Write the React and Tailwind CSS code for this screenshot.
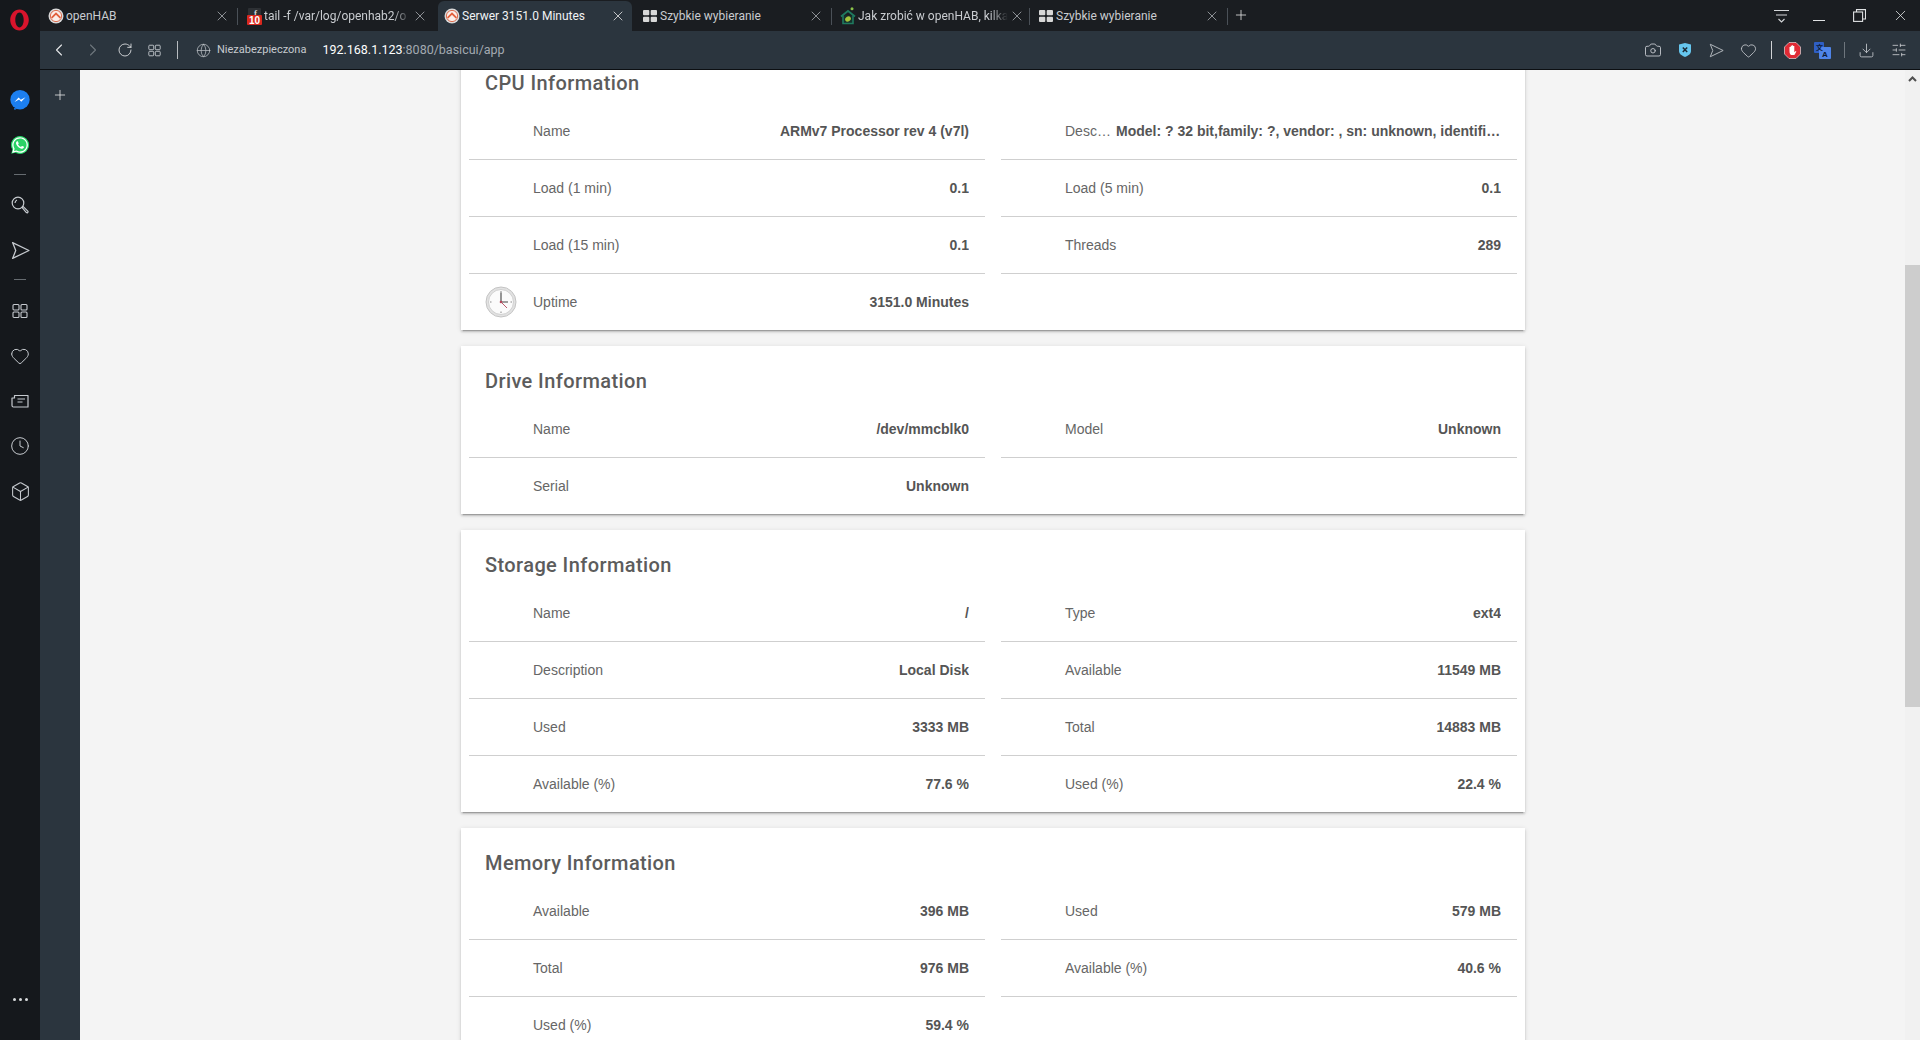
import React from 'react';
import { ChevronLeft, ChevronRight, RotateCw, Globe, Camera, Heart, Download, SlidersHorizontal, X, Plus, Clock, Box } from 'lucide-react';
import { FaWhatsapp } from 'react-icons/fa';

const cards = [
  {
    title: 'CPU Information',
    rows: [
      { label: 'Name', value: 'ARMv7 Processor rev 4 (v7l)' },
      { label: 'Description', value: 'Model: ? 32 bit,family: ?, vendor: , sn: unknown, identifier: ?', shrink: true },
      { label: 'Load (1 min)', value: '0.1' },
      { label: 'Load (5 min)', value: '0.1' },
      { label: 'Load (15 min)', value: '0.1' },
      { label: 'Threads', value: '289' },
      { label: 'Uptime', value: '3151.0 Minutes', clock: true },
    ],
  },
  {
    title: 'Drive Information',
    rows: [
      { label: 'Name', value: '/dev/mmcblk0' },
      { label: 'Model', value: 'Unknown' },
      { label: 'Serial', value: 'Unknown' },
    ],
  },
  {
    title: 'Storage Information',
    rows: [
      { label: 'Name', value: '/' },
      { label: 'Type', value: 'ext4' },
      { label: 'Description', value: 'Local Disk' },
      { label: 'Available', value: '11549 MB' },
      { label: 'Used', value: '3333 MB' },
      { label: 'Total', value: '14883 MB' },
      { label: 'Available (%)', value: '77.6 %' },
      { label: 'Used (%)', value: '22.4 %' },
    ],
  },
  {
    title: 'Memory Information',
    rows: [
      { label: 'Available', value: '396 MB' },
      { label: 'Used', value: '579 MB' },
      { label: 'Total', value: '976 MB' },
      { label: 'Available (%)', value: '40.6 %' },
      { label: 'Used (%)', value: '59.4 %' },
    ],
  },
];

const tabs = [
  { title: 'openHAB', icon: 'hab', sep: true },
  { title: 'tail -f /var/log/openhab2/o', icon: 'tail', fade: true },
  { title: 'Serwer 3151.0 Minutes', icon: 'hab', active: true },
  { title: 'Szybkie wybieranie', icon: 'dial', sep: true },
  { title: 'Jak zrobić w openHAB, kilka', icon: 'home', fade: true, sep: true },
  { title: 'Szybkie wybieranie', icon: 'dial', sep: true },
];

const HabIcon = () => (
  <svg width="16" height="16" viewBox="0 0 16 16" className="shrink-0">
    <circle cx="8" cy="8" r="7.5" fill="#d9d9d9" />
    <circle cx="8" cy="8" r="5.6" fill="#fbeee9" stroke="#d9603f" strokeWidth="0.9" />
    <path d="M3.6 9.8 8 5.6l4.400 4.200" fill="none" stroke="#e2603c" strokeWidth="1.8" />
  </svg>
);

const TailIcon = () => (
  <svg width="15" height="17" viewBox="0 0 15 17" className="shrink-0">
    <rect x="1" y="0" width="13" height="9" rx="1" fill="#2d3034" />
    <text x="7" y="7.500" fill="#d5d5d5" fontSize="9" fontWeight="700" fontFamily="Liberation Serif, serif">f</text>
    <rect x="0" y="7" width="15" height="10" rx="1" fill="#d9281e" />
    <text x="7.500" y="16" fill="#fff" fontSize="10" fontWeight="700" textAnchor="middle" fontFamily="Liberation Sans, sans-serif">10</text>
  </svg>
);

const DialIcon = () => (
  <svg width="14" height="12" viewBox="0 0 14 12" className="shrink-0">
    <rect x="0" y="0" width="6.3" height="5.3" rx="1" fill="#d8d8d8" />
    <rect x="7.7" y="0" width="6.3" height="5.3" rx="1" fill="#d8d8d8" />
    <rect x="0" y="6.7" width="6.3" height="5.3" rx="1" fill="#d8d8d8" />
    <rect x="7.7" y="6.7" width="6.3" height="5.3" rx="1" fill="#d8d8d8" />
  </svg>
);

const HomeIcon = () => (
  <svg width="16" height="18" viewBox="0 0 16 18" className="shrink-0">
    <circle cx="12" cy="1.800" r="1.500" fill="#8bc34a" />
    <path d="M3 8.500V16.500H13V8.500" fill="#16302b" stroke="#1f7a5f" strokeWidth="1.600" />
    <path d="M1 9.500 8 4l7 5.500" fill="none" stroke="#1f7a5f" strokeWidth="1.800" />
    <ellipse cx="8" cy="12" rx="3" ry="2.400" fill="#a5c53a" transform="rotate(-35 8 12)" />
  </svg>
);

const favicons = { hab: HabIcon, tail: TailIcon, dial: DialIcon, home: HomeIcon };

const Tab = ({ tab }) => {
  const Icon = favicons[tab.icon];
  return (
    <div className="relative w-[198px] h-[30px] mt-px flex">
      <div className={`flex-1 flex items-center ${tab.active ? 'mx-[2px] px-[6px] bg-[#2b353e] rounded-t-md' : 'px-[8px]'}`}>
        <div className="w-[16px] flex justify-center shrink-0"><Icon /></div>
        <div className={`ml-[2px] flex-1 min-w-0 overflow-hidden whitespace-nowrap text-[12px] ${tab.active ? 'text-[#f0f2f4]' : 'text-[#c9ccd0]'} ${tab.fade ? '[mask-image:linear-gradient(to_right,black_88%,transparent)]' : ''}`}>
          {tab.title}
        </div>
        <X size={16} strokeWidth={1.2} className={`ml-[1px] shrink-0 ${tab.active ? 'text-[#e8e8e8]' : 'text-[#a9adb2]'}`} />
      </div>
      {tab.sep && <div className="absolute right-0 top-[7px] h-[17px] w-px bg-[#4a5057]" />}
    </div>
  );
};

const GridIcon = ({ size = 16, color = '#c6cacf' }) => (
  <svg width={size} height={size} viewBox="0 0 16 16" fill="none" stroke={color} strokeWidth="1.1">
    <rect x="1" y="1.5" width="6" height="5.5" rx="1" />
    <rect x="9" y="1.5" width="6" height="5.5" rx="1" />
    <rect x="1" y="9" width="6" height="5.5" rx="1" />
    <rect x="9" y="9" width="6" height="5.5" rx="1" />
  </svg>
);

const SendIcon = ({ size = 18, color = '#c6cacf' }) => (
  <svg width={size} height={size} viewBox="0 0 18 18" fill="none" stroke={color} strokeWidth="1.2" strokeLinejoin="round">
    <path d="M1.5 1.5 17 9 1.5 16.5 4.5 9z" />
  </svg>
);

const NewsIcon = () => (
  <svg width="18" height="14" viewBox="0 0 18 14" fill="none" stroke="#c6cacf" strokeWidth="1.2" strokeLinejoin="round">
    <path d="M3.5 1.5h13.5v11.5H2.5A1.5 1.5 0 0 1 1 11.5V4h2.5z" />
    <path d="M6.5 5h7.5M6.5 8h5" />
  </svg>
);

const SearchIcon = () => (
  <svg width="18" height="18" viewBox="0 0 18 18" fill="none" stroke="#c6cacf" strokeWidth="1.2">
    <circle cx="7" cy="7" r="5.8" />
    <path d="M4 7a3.4 3.4 0 0 1 2-3" />
    <path d="M11 11.4 12 10.4l4.800 4.800a1 1 0 0 1-1.400 1.400z" strokeLinejoin="round" />
  </svg>
);

const MessengerIcon = () => (
  <svg width="20" height="20" viewBox="0 0 20 20">
    <circle cx="10" cy="9.7" r="9.7" fill="#1c7ff0" />
    <path d="M4 18l.5 2 3-1.5z" fill="#1c7ff0" />
    <path d="M4.5 12 8.6 7.6l2.2 2.2 4.7-2.6-4.2 4.6-2.2-2.2z" fill="#fff" />
  </svg>
);

const WhatsappIcon = () => (
  <div className="relative w-[20px] h-[20px]">
    <div className="absolute inset-[1px] rounded-full bg-[#2bd366]" />
    <FaWhatsapp size={20} className="relative text-[#25d366]" />
    <FaWhatsapp size={18} className="absolute left-[1px] top-[1px] text-white" />
  </div>
);

const OperaLogo = () => (
  <svg width="20" height="22" viewBox="0 0 20 22">
    <path
      fillRule="evenodd"
      d="M9.500.5C14.600.5 18.800 5.200 18.800 11S14.600 21.500 9.500 21.500.2 16.800.2 11 4.400.5 9.500.5zM9.500 3.600C7.100 3.600 5.300 7 5.300 11s1.800 7.400 4.200 7.400 4.200-3.400 4.200-7.400-1.800-7.400-4.200-7.400z"
      fill="#d9142c"
    />
  </svg>
);

const ShieldIcon = () => (
  <svg width="14" height="14" viewBox="0 0 14 14">
    <path d="M1 1.5 7 0l6 1.5v6.5c0 3-3 4.800-6 6-3-1.200-6-3-6-6z" fill="#66c6ee" />
    <path d="M4.800 4.500 9.200 9M9.200 4.500 4.800 9" stroke="#1d2a35" strokeWidth="1.500" />
  </svg>
);

const StopIcon = () => (
  <svg width="17" height="17" viewBox="0 0 17 17">
    <path d="M5 .5h7L16.500 5v7L12 16.500H5L.5 12V5z" fill="#e02a35" stroke="#f2f2f2" strokeWidth=".6" />
    <path d="M5.500 9V5h1.200v3V3.800h1.200V8V3.300h1.200V8V4h1.200v6.300l1.400-1.300.7.600-2 3.400H7.200C6 12.500 5.500 11 5.500 9z" fill="#fff" />
  </svg>
);

const TranslateIcon = () => (
  <svg width="17" height="17" viewBox="0 0 17 17">
    <rect x="0" y="0" width="10" height="11" rx="1" fill="#2f5fc4" />
    <rect x="5" y="5" width="12" height="12" rx="1" fill="#4f84e8" />
    <text x="2" y="8" fontSize="7" fill="#0d1a33" fontWeight="700" fontFamily="Noto Sans CJK SC, sans-serif">文</text>
    <text x="8" y="15" fontSize="8" fill="#0d1a33" fontWeight="700" fontFamily="Liberation Sans, sans-serif">A</text>
  </svg>
);

const FilterIcon = () => (
  <svg width="15" height="15" viewBox="0 0 15 15" fill="none" stroke="#d4d6d9" strokeWidth="1.100">
    <path d="M0 1.500h15M2 6h11M4.500 10 7.500 13 10.500 10" />
  </svg>
);

const RestoreIcon = () => (
  <svg width="13" height="13" viewBox="0 0 13 13" fill="none" stroke="#e0e2e4" strokeWidth="1.100">
    <rect x=".6" y="3" width="9" height="9.400" />
    <path d="M3.500 3V.6h9v9.400H9.600" />
  </svg>
);

const ClockFace = () => (
  <svg width="32" height="32" viewBox="0 0 32 32" className="shrink-0">
    <circle cx="16" cy="16" r="15" fill="#e2e2e2" stroke="#c4c4c4" strokeWidth="1" />
    <circle cx="16" cy="16" r="12.5" fill="#fbfbfb" stroke="#d0d0d0" strokeWidth="1" />
    <path d="M16 5v1.500M16 25.500V27M5 16h1.500M25.500 16H27" stroke="#888" strokeWidth="1" />
    <path d="M16 6.500V16H23" fill="none" stroke="#444" strokeWidth="1.100" />
    <path d="M16 16l6 6" stroke="#b5485b" strokeWidth=".9" />
    <circle cx="16" cy="16" r="1.300" fill="#b5485b" />
  </svg>
);

const Row = ({ row, last }) => (
  <div className={`flex items-center pr-[16px] font-['Liberation_Sans',Arial,sans-serif] ${last ? 'h-[56px]' : 'h-[57px] border-b border-[#cfcfcf]'}`}>
    <div className="w-[64px] pl-[16px] shrink-0">{row.clock && <ClockFace />}</div>
    <div className={`text-[14px] text-[#666666] whitespace-nowrap ${row.shrink ? 'w-[46px] overflow-hidden text-ellipsis mr-[5px] shrink-0' : ''}`}>
      {row.label}
    </div>
    <div className="flex-1 min-w-0 text-right text-[14px] font-bold text-[#555555] whitespace-nowrap overflow-hidden text-ellipsis">
      {row.value}
    </div>
  </div>
);

const Card = ({ card, first }) => {
  const rowCount = Math.ceil(card.rows.length / 2);
  return (
    <section className={`w-[1064px] px-[8px] bg-white shadow-[0_2px_2px_rgba(0,0,0,0.14),0_3px_1px_-2px_rgba(0,0,0,0.2),0_1px_5px_rgba(0,0,0,0.12)] ${first ? '-mt-[22px]' : 'mt-[16px]'}`}>
      <h2 className="h-[55px] pt-[21px] pl-[16px] text-[20px] leading-[28px] font-medium tracking-[0.02em] text-[#5c5c5c]">
        {card.title}
      </h2>
      <div className="grid grid-cols-[516px_516px] gap-x-[16px]">
        {card.rows.map((row, i) => (
          <Row key={card.title + row.label} row={row} last={Math.floor(i / 2) === rowCount - 1} />
        ))}
      </div>
    </section>
  );
};

export default function App() {
  return (
    <div className="w-[1920px] h-[1040px] flex overflow-hidden bg-[#15181c] font-['Roboto',sans-serif]">
      {/* opera sidebar */}
      <aside className="w-[40px] shrink-0 flex flex-col items-center">
        <div className="h-[70px] pt-[9px]"><OperaLogo /></div>
        <div className="mt-[20px]"><MessengerIcon /></div>
        <div className="mt-[25px]"><WhatsappIcon /></div>
        <div className="mt-[19px] w-[12px] h-px bg-[#666b70]" />
        <div className="mt-[21px] h-[18px]"><SearchIcon /></div>
        <div className="mt-[27px]"><SendIcon size={19} /></div>
        <div className="mt-[19px] w-[12px] h-px bg-[#666b70]" />
        <div className="mt-[23px]"><GridIcon /></div>
        <Heart size={20} strokeWidth={1.2} className="mt-[27px] text-[#c6cacf]" />
        <div className="mt-[28px]"><NewsIcon /></div>
        <Clock size={20} strokeWidth={1.2} className="mt-[28px] text-[#c6cacf]" />
        <Box size={21} strokeWidth={1.2} className="mt-[25px] text-[#c6cacf]" />
        <div className="mt-auto mb-[39px] flex gap-[3px]">
          <span className="w-[3px] h-[3px] rounded-full bg-[#d8dadc]" />
          <span className="w-[3px] h-[3px] rounded-full bg-[#d8dadc]" />
          <span className="w-[3px] h-[3px] rounded-full bg-[#d8dadc]" />
        </div>
      </aside>

      <div className="flex-1 flex flex-col min-w-0">
        {/* tab strip */}
        <div className="h-[31px] shrink-0 flex items-start bg-[#1a1d21]">
          {tabs.map((tab, i) => (
            <Tab key={i} tab={tab} />
          ))}
          <Plus size={16} strokeWidth={1.2} className="ml-[5px] mt-[7px] text-[#e8e8e8]" />
          <div className="ml-auto flex items-center h-[31px]">
            <div className="mr-[24px] mt-[2px]"><FilterIcon /></div>
            <div className="w-[12px] h-px bg-[#e0e2e4] mr-[28px] mt-[10px]" />
            <div className="mr-[26px]"><RestoreIcon /></div>
            <X size={17} strokeWidth={1.1} className="mr-[11px] text-[#e8eaec]" />
          </div>
        </div>

        {/* address bar */}
        <div className="h-[39px] shrink-0 flex items-center bg-[#2b353e] border-b border-[#0c0f12] pl-[9px]">
          <ChevronLeft size={20} strokeWidth={1.3} className="text-[#e4e6e8]" />
          <ChevronRight size={20} strokeWidth={1.3} className="ml-[14px] text-[#6e767d]" />
          <RotateCw size={16} strokeWidth={1.3} className="ml-[14px] text-[#e0e2e4]" />
          <div className="ml-[15px]"><GridIcon size={13} /></div>
          <div className="ml-[16px] w-px h-[18px] bg-[#b8bcc0]" />
          <Globe size={15} strokeWidth={1.1} className="ml-[18px] text-[#c6cacf]" />
          <span className="ml-[6px] text-[11px] text-[#c6cacf]">Niezabezpieczona</span>
          <span className="ml-[16px] text-[12.5px] text-white">192.168.1.123<span className="text-[#a3aab1]">:8080/basicui/app</span></span>
          <div className="ml-auto flex items-center">
            <Camera size={18} strokeWidth={1.2} className="text-[#c6cacf]" />
            <div className="ml-[16px]"><ShieldIcon /></div>
            <div className="ml-[17px]"><SendIcon size={15} color="#b0b5ba" /></div>
            <Heart size={17} strokeWidth={1.2} className="ml-[16px] text-[#c6cacf]" />
            <div className="ml-[14px] w-px h-[18px] bg-[#d0d3d6]" />
            <div className="ml-[12px]"><StopIcon /></div>
            <div className="ml-[13px]"><TranslateIcon /></div>
            <div className="ml-[13px] w-px h-[16px] bg-[#6e767d]" />
            <Download size={17} strokeWidth={1.2} className="ml-[13px] text-[#c6cacf]" />
            <SlidersHorizontal size={16} strokeWidth={1.2} className="ml-[16px] mr-[13px] text-[#d0d3d6]" />
          </div>
        </div>

        <div className="flex-1 flex min-h-0">
          {/* tab list panel */}
          <div className="w-[40px] shrink-0 flex justify-center pt-[17px] bg-[#2b353e]">
            <Plus size={16} strokeWidth={1.2} className="text-[#e8e8e8]" />
          </div>

          {/* page */}
          <main className="flex-1 min-w-0 overflow-hidden bg-[#f4f4f4] pl-[381px]">
            {cards.map((card, i) => (
              <Card key={card.title} card={card} first={i === 0} />
            ))}
          </main>

          {/* scrollbar */}
          <div className="w-[15px] shrink-0 bg-[#f1f1f1]">
            <div className="h-[17px] flex items-center justify-center">
              <svg width="9" height="6" viewBox="0 0 9 6" fill="none" stroke="#505050" strokeWidth="2"><path d="M1 5 4.500 1.500 8 5" /></svg>
            </div>
            <div className="mt-[178px] h-[442px] bg-[#cdcdcd]" />
          </div>
        </div>
      </div>
    </div>
  );
}
